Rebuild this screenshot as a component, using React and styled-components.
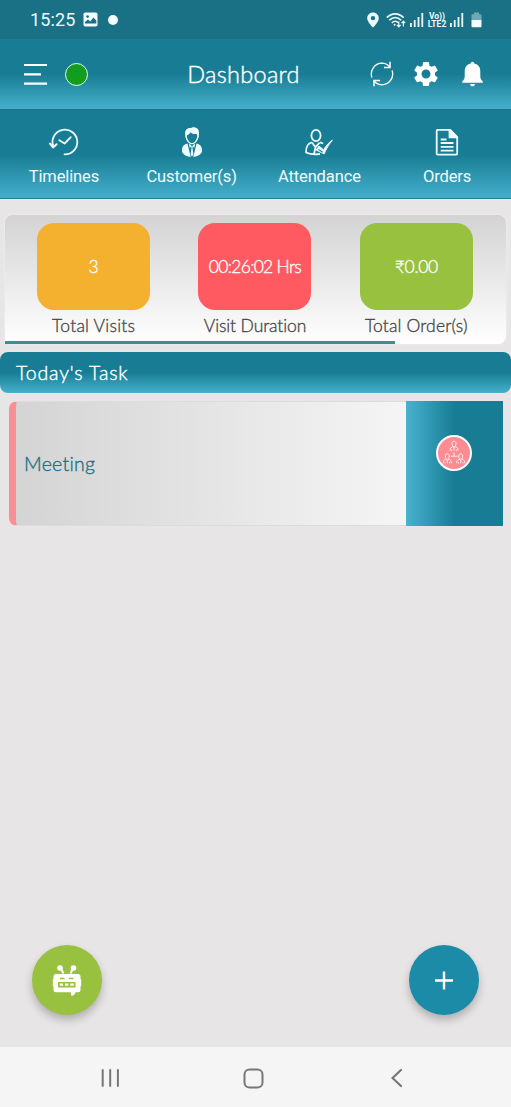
import React from "react";
import styled, { createGlobalStyle } from "styled-components";
import { MdSettings } from "react-icons/md";

const GlobalStyle = createGlobalStyle`
  * {
    box-sizing: border-box;
  }

  body {
    margin: 0;
    background: #e7e5e6;
  }

  svg {
    display: block;
    flex-shrink: 0;
  }
`;

const tealGradient = "#187d94 0%, #187d94 50%, #2f97b0 75%, #45afcc 100%";

const Screen = styled.div`
  height: 1107px;
  display: flex;
  flex-direction: column;
  overflow: hidden;
  background: #e7e5e6;
  font-family: "Lato", "Open Sans", sans-serif;
  font-weight: 300;
  font-variant-ligatures: none;
`;

// System status bar
const StatusBar = styled.div`
  height: 39px;
  padding: 0 29px 0 30px;
  display: flex;
  align-items: center;
  background: #1a7085;
  color: #e9fbff;
`;

const Clock = styled.span`
  width: 53px;
  font-family: "Roboto", sans-serif;
  font-size: 18px;
  font-weight: 400;
  letter-spacing: 0.15px;
  line-height: 39px;
`;

const StatusDot = styled.span`
  width: 10px;
  height: 10px;
  margin-left: 10px;
  margin-right: auto;
  border-radius: 50%;
  background: #f1fdff;
`;

const StatusIcons = styled.div`
  display: flex;
  align-items: center;
  gap: ${(props) => props.$gap}px;
`;

const NetworkLabel = styled.div`
  width: 20px;
  display: flex;
  flex-direction: column;
  align-items: center;
  font-family: "Roboto", sans-serif;
  font-size: 8.5px;
  font-weight: 700;
  line-height: 8px;
`;

// App header
const Header = styled.header`
  height: 70px;
  padding: 0 28px 0 24px;
  display: flex;
  align-items: center;
  background: linear-gradient(to bottom, ${tealGradient});
  color: white;
`;

const HeaderSide = styled.div`
  flex: 1;
  display: flex;
  align-items: center;
  justify-content: ${(props) => (props.$end ? "flex-end" : "flex-start")};
`;

const OnlineDot = styled.span`
  width: 23px;
  height: 23px;
  margin-left: 17px;
  border: 1.5px solid #e6f7ee;
  border-radius: 50%;
  background: #129d1f;
`;

const Title = styled.h1`
  margin: 0 20px 0 0;
  font-size: 23.5px;
  font-weight: 300;
  letter-spacing: 0.3px;
  -webkit-text-stroke: 0.4px;
`;

const Gear = styled(MdSettings)`
  margin: 0 21px 0 17px;
`;

// Row of shortcuts under the header
const Shortcuts = styled.nav`
  height: 91px;
  padding-top: 17px;
  display: grid;
  grid-template-columns: repeat(4, 1fr);
  background: linear-gradient(to bottom, ${tealGradient});
  border-top: 1px solid #17758b;
  border-bottom: 1px solid #d3eff5;
  box-shadow: inset 0 -1px 0 #257f96;
`;

const Shortcut = styled.button`
  padding: 0;
  border: none;
  background: none;
  display: flex;
  flex-direction: column;
  align-items: center;
  justify-content: flex-start;
  gap: 8px;
  color: #effcff;
  font-family: "Roboto", sans-serif;
  font-size: 16.5px;
  line-height: 20px;
  letter-spacing: -0.12px;

  svg {
    margin-top: -1px;
    margin-bottom: 1px;
  }
`;

// Summary panel
const Summary = styled.section`
  height: 129px;
  margin: 15px 5px 0;
  padding: 8px 0 0;
  display: flex;
  flex-direction: column;
  justify-content: space-between;
  border-radius: 8px 8px 8px 0;
  background: linear-gradient(to bottom, #d3d3d3, #ffffff);
  box-shadow: 0 0 3px rgba(255, 255, 255, 0.5);
`;

const StatRow = styled.div`
  padding: 0 9px 0 8px;
  display: grid;
  grid-template-columns: repeat(3, 1fr);
`;

const Stat = styled.div`
  display: flex;
  flex-direction: column;
  align-items: center;
  color: #484848;
  font-size: 17.5px;
  line-height: 31px;
  white-space: nowrap;
  letter-spacing: ${(props) => props.$spacing};
  -webkit-text-stroke: 0.35px;
`;

const StatValue = styled.div`
  width: 113px;
  height: 87px;
  display: flex;
  align-items: center;
  justify-content: center;
  border-radius: 17px;
  background: ${(props) => props.$color};
  color: white;
  font-size: 17.5px;
  letter-spacing: ${(props) => props.$spacing || "0"};
`;

const Progress = styled.div`
  width: ${(props) => props.$value}%;
  height: 3px;
  flex-shrink: 0;
  background: #3c8e96;
`;

// Task list
const SectionHeader = styled.h2`
  height: 41px;
  margin: 8px 0 8px;
  padding-left: 16px;
  border-radius: 8px;
  background: linear-gradient(to bottom, ${tealGradient});
  color: white;
  font-size: 19.5px;
  font-weight: 300;
  line-height: 42px;
  letter-spacing: 0.85px;
  -webkit-text-stroke: 0.4px;
`;

const Task = styled.article`
  height: 125px;
  margin: 0 8px 0 9px;
  display: flex;
`;

const TaskBody = styled.div`
  flex: 1;
  padding-left: 8px;
  display: flex;
  align-items: center;
  border: 1px solid #dddbdb;
  border-right: none;
  border-left: 7px solid #f98f95;
  border-radius: 8px 0 0 8px;
  background: linear-gradient(to right, #d4d4d4, #f5f5f5);
  color: #1c7184;
  font-size: 19.5px;
  letter-spacing: 0.25px;
  -webkit-text-stroke: 0.35px;
`;

const TaskSide = styled.div`
  width: 97px;
  padding: 34px 2px 0 0;
  display: flex;
  justify-content: center;
  background: linear-gradient(to right, #48b2cf, #187d94 50%);
`;

const TaskIcon = styled.div`
  width: 36px;
  height: 36px;
  border: 2px solid white;
  border-radius: 50%;
  display: flex;
  align-items: center;
  justify-content: center;
  background: #fb8c93;
`;

// Floating buttons
const Actions = styled.div`
  margin-top: auto;
  padding: 0 32px 26px;
  display: flex;
  justify-content: space-between;
`;

const RoundButton = styled.button`
  width: 70px;
  height: 70px;
  padding: 0;
  border: none;
  border-radius: 50%;
  display: flex;
  align-items: center;
  justify-content: center;
  background: ${(props) => props.$color};
  box-shadow: 0 5px 9px rgba(0, 0, 0, 0.24);
`;

// System navigation bar
const SystemNav = styled.div`
  height: 66px;
  border-top: 6px solid #e6e6e6;
  padding: 2px 108px 0 101px;
  display: flex;
  align-items: center;
  justify-content: space-between;
  background: #f5f5f5;
`;

const SignalIcon = () => (
  <svg width="14" height="16" viewBox="0 0 14 16" fill="currentColor">
    <rect x="0" y="11" width="1.8" height="4" />
    <rect x="3.8" y="8" width="1.8" height="7" />
    <rect x="7.6" y="5" width="1.8" height="10" />
    <rect x="11.4" y="1" width="1.8" height="14" />
  </svg>
);

const PictureIcon = () => (
  <svg width="15" height="15" viewBox="0 0 15 15">
    <rect x="0.5" y="0.5" width="14" height="14" rx="1.8" fill="#f1fdff" />
    <circle cx="4.6" cy="4.6" r="1.3" fill="#1a7085" />
    <path d="M2 11.5V10l3-2.4 2.2 1.8 3.2-3.8 2.9 2.9v3z" fill="#1a7085" />
  </svg>
);

const PinIcon = () => (
  <svg width="12" height="16" viewBox="0 0 12 16">
    <path
      fill="currentColor"
      fillRule="evenodd"
      d="M6 .5C2.8.5.2 3 .2 6.2c0 3.9 5.8 9.3 5.8 9.3s5.8-5.4 5.8-9.3C11.8 3 9.2.5 6 .5zm0 3.4a2.2 2.2 0 1 1 0 4.4 2.2 2.2 0 0 1 0-4.4z"
    />
  </svg>
);

const WifiIcon = () => (
  <svg width="20" height="16" viewBox="0 0 20 16" fill="none" stroke="currentColor" strokeWidth="1.6">
    <path d="M.8 5.6c5-5 11.8-5 16.8 0" />
    <path d="M3.2 8.3c3.7-3.6 8.4-3.6 12 0" />
    <path d="M5.8 10.9c2.1-2 4.5-2 6.4-.3" />
    <circle cx="8.6" cy="12.7" r="1" fill="currentColor" stroke="none" />
    <path d="M12.8 9.5v5.2M10.9 12.8l1.9 2 1.9-2M17.4 14.5V9.3M15.6 11.2l1.8-2 1.8 2" strokeWidth="1.2" />
  </svg>
);

const BatteryIcon = () => (
  <svg width="11" height="16" viewBox="0 0 11 16">
    <path d="M3 .5h5v1.7h1.5Q10.5 2.2 10.5 3.2V8H.5V3.2Q.5 2.2 1.5 2.2H3z" fill="#6fa8b7" />
    <path d="M.5 8h10v6.3q0 1-1 1h-8q-1 0-1-1z" fill="#f1fdff" />
  </svg>
);

const MenuIcon = () => (
  <svg width="24" height="23" viewBox="0 0 24 23" stroke="white" strokeWidth="2.2">
    <path d="M0 2h23M0 11.4h17M0 20.7h23" />
  </svg>
);

const RefreshIcon = () => (
  <svg width="24" height="26" viewBox="0 0 24 26" fill="none" stroke="white" strokeWidth="1.3">
    <path d="M1.9 16.5C-.3 9.5 4.4 2.4 12 2.2c3.3 0 5.7 1.4 7.7 3.6" />
    <path d="M22.1 9.5c2.2 7-2.5 14.1-10.1 14.3-3.3 0-5.7-1.4-7.7-3.6" />
    <path d="M20 .8v5.7h-6M4 25.2v-5.7h6" strokeWidth="1.5" />
  </svg>
);

const BellIcon = () => (
  <svg width="21" height="26" viewBox="0 0 21 26" fill="white">
    <path d="M10.5.8c-1 0-1.7.7-1.8 1.7-4 .8-6 3.9-6 7.8v5c0 2.4-.8 3.8-2.4 5v1.500h20.400v-1.500c-1.600-1.200-2.400-2.600-2.400-5v-5c0-3.900-2-7-6-7.800-.1-1-.8-1.700-1.800-1.700z" />
    <path d="M8 22.900h5c-.2 1.500-1.200 2.300-2.500 2.300S8.200 24.400 8 22.900z" />
  </svg>
);

const TimelineIcon = () => (
  <svg width="32" height="32" viewBox="0 0 32 32" fill="none" stroke="currentColor" strokeWidth="1.8" strokeLinecap="round" strokeLinejoin="round">
    <path d="M16.5 28.400A12.400 12.400 0 1 0 5 19.500" />
    <path d="M2 17.600l3 3.800 3.600-3.200" strokeWidth="2" />
    <path d="M11.300 14.200l5.300 3.300 6.200-6.300" />
  </svg>
);

const CustomerIcon = () => (
  <svg width="32" height="32" viewBox="0 0 32 32">
    <path d="M9.300 9.500C8.300 4 11.200 1.700 15 2l1.700-.8c4.500-.1 7.300 2.300 6.100 8.300L22.300 12l-1.700-4c-2.200.4-4.500-.2-6.100-1.800-1 1.800-2.500 2.700-3.500 3.100L9.900 12z" fill="currentColor" />
    <path d="M10 9.500c0 4.500 3.500 8.200 6 8.200s6-3.700 6-8.200" fill="none" stroke="currentColor" strokeWidth="1.3" />
    <path d="M11.500 17.500C7.300 18.500 6 20.500 6 25c0 3 4.500 5.500 8.700 6L11.500 17.500zM20.500 17.500C24.700 18.500 26 20.500 26 25c0 3-4.500 5.500-8.700 6l3.200-13.500z" fill="currentColor" />
    <path d="M12.800 17.800l2.600 1.500-1.500 2.900zM19.200 17.800l-2.600 1.500 1.500 2.900z" fill="currentColor" />
    <path d="M15.200 20h1.600l-.3 2 .9 6.500L16 30.500l-1.400-2 .9-6.500z" fill="currentColor" />
  </svg>
);

const AttendanceIcon = () => (
  <svg width="32" height="32" viewBox="0 0 32 32" fill="none" stroke="currentColor" strokeWidth="1.8" strokeLinejoin="round">
    <ellipse cx="13" cy="9.500" rx="4.600" ry="5.700" />
    <path d="M9 16.300c-4 1-6 3.200-6 10.200 5 2.300 10.500 2 14 1.500M17 16.300c1 .3 2.200.6 3 1.300M9 16.500l3.500 4.700 4.200-4.500M12.500 21.200l-1.500 7" />
    <path d="M13 24l3-4 4.600 3.700C23 19.500 26 16.300 29.500 14c-3.700 4.600-6.200 8.900-8.300 14z" fill="currentColor" strokeWidth=".8" />
    <path d="M15.500 23.500l4.200 2.800" stroke="#27879d" strokeWidth="1.2" />
  </svg>
);

const OrdersIcon = () => (
  <svg width="32" height="32" viewBox="0 0 32 32" fill="none" stroke="currentColor" strokeWidth="1.8" strokeLinejoin="round">
    <path d="M6.700 3.900h12.500l7 7.200v16.500q0 1-1 1H6.700q-1 0-1-1V4.900q0-1 1-1z" />
    <path d="M18.500 3.900v7.500h7.700z" fill="currentColor" />
    <path d="M9.700 13.500h5.800M9.700 17h12.800M9.700 20.800h12.800M9.700 24.600h12.800" />
  </svg>
);

const TeamIcon = () => (
  <svg width="26" height="26" viewBox="0 0 26 26" fill="none" stroke="#fff2f2" strokeWidth=".9">
    {[
      [13, 1],
      [6.3, 13.5],
      [19.7, 13.5],
    ].map(([x, y]) => (
      <g key={x} transform={`translate(${x} ${y})`}>
        <path d="M-2 2.500c0-3 4-3 4 0 0 2-1 3.200-2 3.200s-2-1.200-2-3.200z" />
        <path d="M-4 9.800c0-2.500.7-3.500 2.500-4.200L0 7.400l1.500-1.800c1.800.7 2.500 1.700 2.500 4.200M0 7.400v2.400M-2.300 8.500v1.300M2.300 8.500v1.300" />
      </g>
    ))}
    <path d="M13 12.500v3.700M9.500 16.200h7" />
  </svg>
);

const BotIcon = () => (
  <svg width="30" height="34" viewBox="0 0 30 34">
    <path d="M8.500 4.500l3 6M21.500 4.500l-3 6" stroke="white" strokeWidth="2" />
    <circle cx="8" cy="5" r="2.800" fill="white" />
    <circle cx="21.500" cy="5" r="2.800" fill="white" />
    <path d="M4 11h22q2.500 0 2.500 2.500v2.700h.7v7h-.7v3.500q0 2.500-2.500 2.500h-2.500c-.4 2-1.700 3.200-4 3.700l-.8-3.700H4q-2.500 0-2.500-2.500v-3.500H.8v-7h.7v-2.700Q1.500 11 4 11z" fill="white" />
    <path d="M8 15.500h4.500M17 15.500h4.500" stroke="#98c140" strokeWidth="1.5" />
    <rect x="6" y="19" width="17.500" height="5.500" fill="#98c140" />
    <path d="M7.700 21.700h3.300M13 21.700h3.300M18.300 21.700h3.500" stroke="white" strokeWidth="2.2" />
  </svg>
);

const PlusIcon = () => (
  <svg width="20" height="20" viewBox="0 0 20 20" stroke="white" strokeWidth="2.4">
    <path d="M1 10.500h18M10 1.500v18" />
  </svg>
);

const RecentsIcon = () => (
  <svg width="19" height="20" viewBox="0 0 19 20" stroke="#777" strokeWidth="2" strokeLinecap="round">
    <path d="M1.700 2v16M9.200 2v16M16.900 2v16" />
  </svg>
);

const HomeIcon = styled((props) => (
  <svg width="21" height="21" viewBox="0 0 21 21" {...props}>
    <rect x="1.500" y="1.500" width="18" height="18" rx="5" fill="none" stroke="#777" strokeWidth="2" />
  </svg>
))`
  margin-right: 5px;
`;

const BackIcon = () => (
  <svg width="12" height="20" viewBox="0 0 12 20" fill="none" stroke="#777" strokeWidth="2.2" strokeLinecap="round">
    <path d="M10 2l-8.500 8 8.500 8" />
  </svg>
);

const shortcuts = [
  { label: "Timelines", icon: <TimelineIcon /> },
  { label: "Customer(s)", icon: <CustomerIcon /> },
  { label: "Attendance", icon: <AttendanceIcon /> },
  { label: "Orders", icon: <OrdersIcon /> },
];

const stats = [
  { label: "Total Visits", value: "3", color: "#f4b02f", spacing: "0.25px" },
  { label: "Visit Duration", value: "00:26:02 Hrs", color: "#ff5a61", spacing: "-0.1px", valueSpacing: "-0.7px" },
  { label: "Total Order(s)", value: "₹0.00", color: "#98c140", spacing: "0.15px", valueSpacing: "-0.3px" },
];

const App = () => {
  return (
    <Screen>
      <GlobalStyle />
      <StatusBar>
        <Clock>15:25</Clock>
        <PictureIcon />
        <StatusDot />
        <StatusIcons $gap={7}>
          <PinIcon />
          <StatusIcons $gap={4}>
            <WifiIcon />
            <StatusIcons $gap={3}>
              <SignalIcon />
              <NetworkLabel>
                <span>Vo))</span>
                <span>LTE2</span>
              </NetworkLabel>
              <SignalIcon />
            </StatusIcons>
          </StatusIcons>
          <BatteryIcon />
        </StatusIcons>
      </StatusBar>

      <Header>
        <HeaderSide>
          <MenuIcon />
          <OnlineDot />
        </HeaderSide>
        <Title>Dashboard</Title>
        <HeaderSide $end>
          <RefreshIcon />
          <Gear size={30} />
          <BellIcon />
        </HeaderSide>
      </Header>

      <Shortcuts>
        {shortcuts.map((item) => (
          <Shortcut key={item.label}>
            {item.icon}
            {item.label}
          </Shortcut>
        ))}
      </Shortcuts>

      <Summary>
        <StatRow>
          {stats.map((stat) => (
            <Stat key={stat.label} $spacing={stat.spacing}>
              <StatValue $color={stat.color} $spacing={stat.valueSpacing}>
                {stat.value}
              </StatValue>
              {stat.label}
            </Stat>
          ))}
        </StatRow>
        <Progress $value={77.8} />
      </Summary>

      <SectionHeader>Today's Task</SectionHeader>
      <Task>
        <TaskBody>Meeting</TaskBody>
        <TaskSide>
          <TaskIcon>
            <TeamIcon />
          </TaskIcon>
        </TaskSide>
      </Task>

      <Actions>
        <RoundButton $color="#98c140" aria-label="Chat bot">
          <BotIcon />
        </RoundButton>
        <RoundButton $color="#1b8ba8" aria-label="Add">
          <PlusIcon />
        </RoundButton>
      </Actions>

      <SystemNav>
        <RecentsIcon />
        <HomeIcon />
        <BackIcon />
      </SystemNav>
    </Screen>
  );
};

export default App;
